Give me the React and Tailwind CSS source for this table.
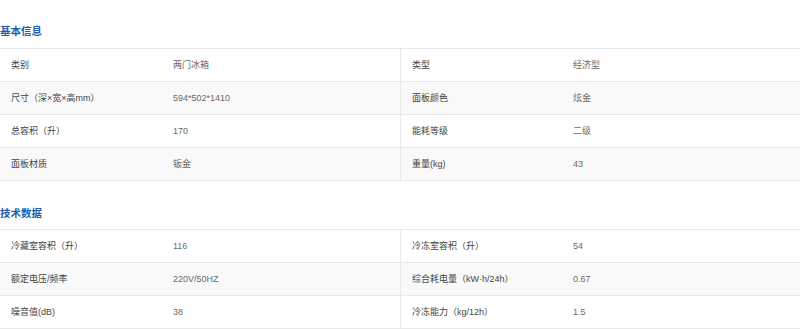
const basic = [
  ['类别', '两门冰箱', '类型', '经济型'],
  ['尺寸（深×宽×高mm）', '594*502*1410', '面板颜色', '炫金'],
  ['总容积（升）', '170', '能耗等级', '二级'],
  ['面板材质', '钣金', '重量(kg)', '43'],
]

const tech = [
  ['冷藏室容积（升）', '116', '冷冻室容积（升）', '54'],
  ['额定电压/频率', '220V/50HZ', '综合耗电量（kW·h/24h）', '0.67'],
  ['噪音值(dB)', '38', '冷冻能力（kg/12h）', '1.5'],
]

function Section({ title, rows, first }) {
  return (
    <div>
      <h2
        className={`${first ? 'pt-[24px] pb-[10px]' : 'pt-[25px] pb-[9px]'} text-[10.5px] leading-[14px] font-bold text-[#1d5dad]`}
      >
        {title}
      </h2>
      <div className="border-t border-[#e8e8e8]">
        {rows.map((r, i) => (
          <div
            key={i}
            className={`flex h-[33px] border-b border-[#e8e8e8] ${i % 2 === 1 ? 'bg-[#f9f9f9]' : 'bg-white'}`}
          >
            <div className="flex w-[400px] items-center">
              <div className="w-[162px] pl-[11px] text-[#444]">{r[0]}</div>
              <div className="flex-1 pl-[11px] text-[#6a6a6a]">{r[1]}</div>
            </div>
            <div className="flex flex-1 items-center border-l border-[#e8e8e8]">
              <div className="w-[161px] pl-[11px] text-[#444]">{r[2]}</div>
              <div className="flex-1 pl-[11px] text-[#6a6a6a]">{r[3]}</div>
            </div>
          </div>
        ))}
      </div>
    </div>
  )
}

export default function App() {
  return (
    <div
      className="w-[800px] h-[329px] overflow-hidden bg-white text-[9px] leading-[12px]"
      style={{ fontFamily: '"Liberation Sans", "Noto Sans CJK SC", sans-serif' }}
    >
      <Section title="基本信息" rows={basic} first />
      <Section title="技术数据" rows={tech} />
    </div>
  )
}
